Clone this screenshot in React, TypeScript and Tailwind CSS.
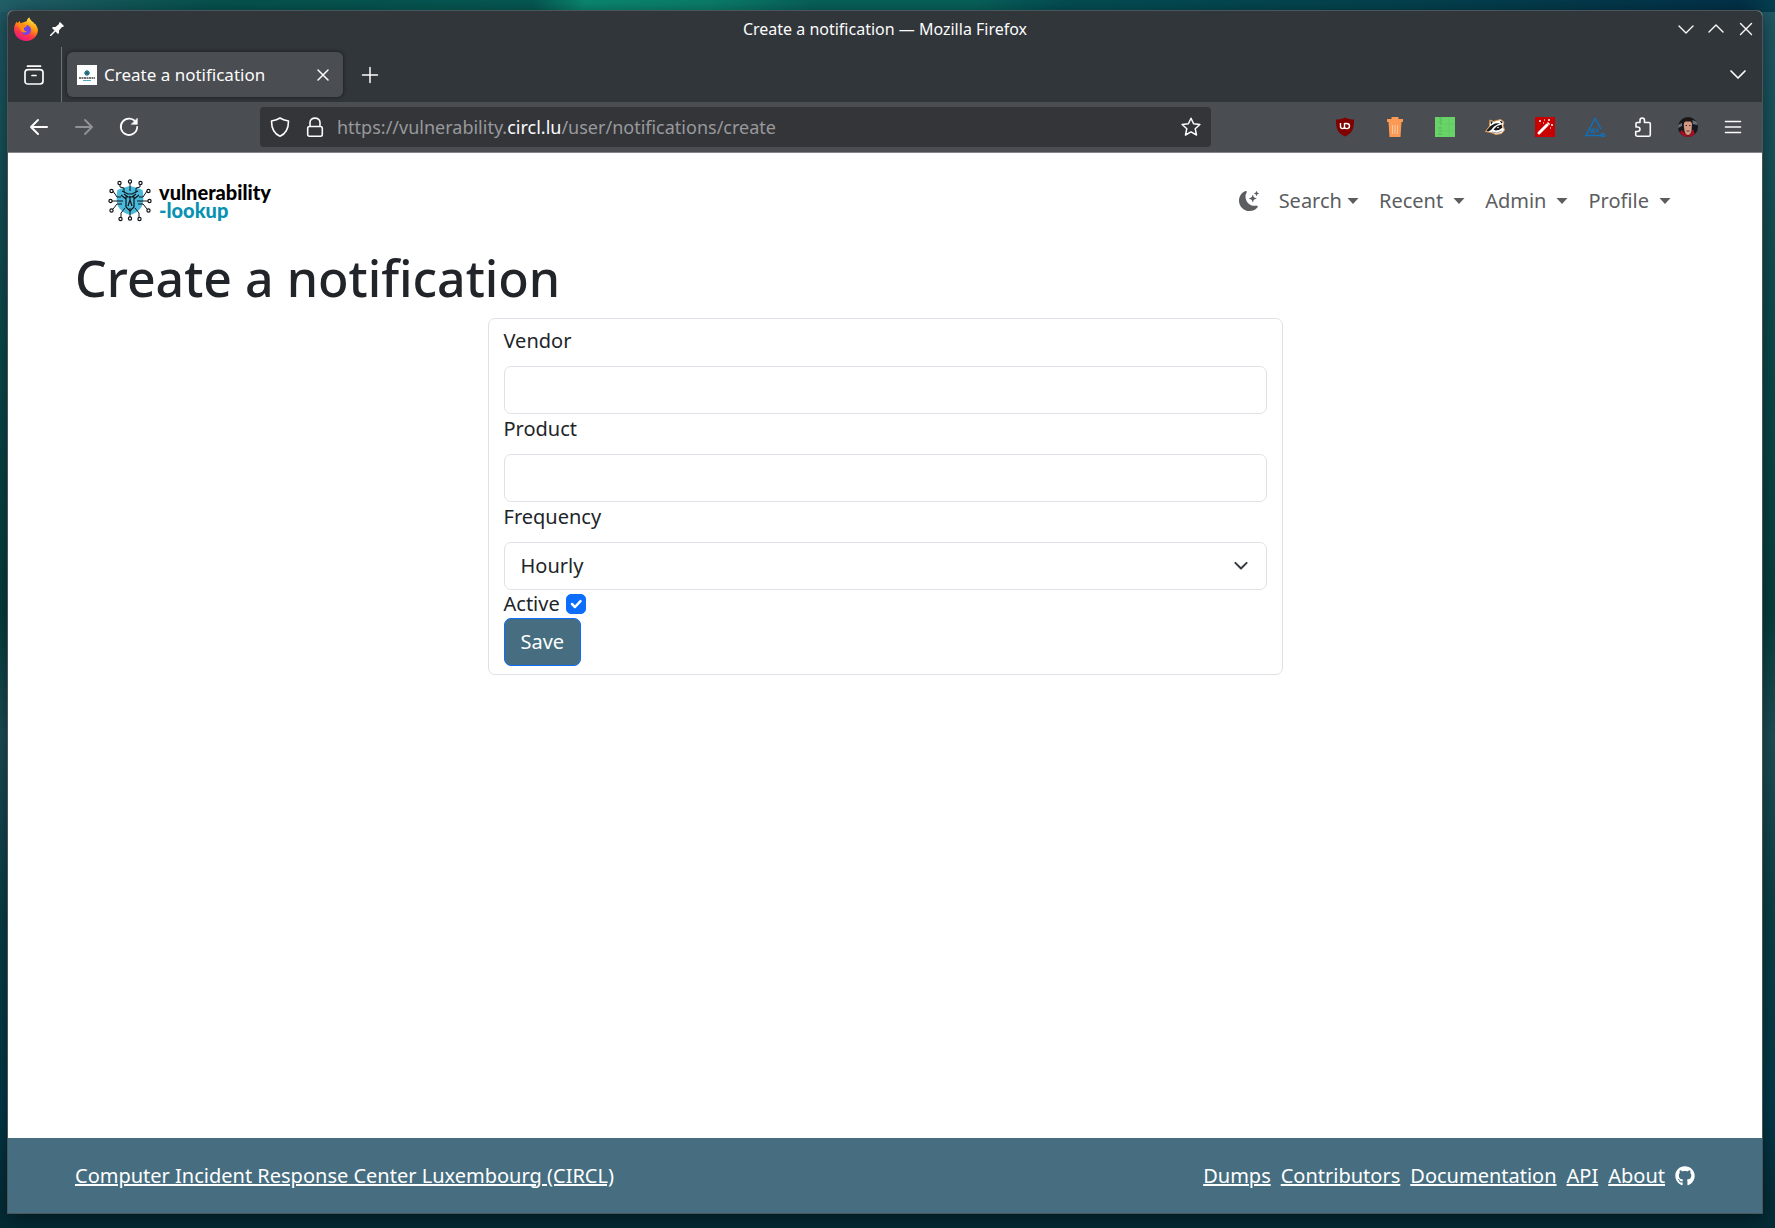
import { useState } from 'react';
import type { ReactNode } from 'react';
import { FaGithub } from 'react-icons/fa';

const navItems = [
  { label: 'Search', gap: 'gap-[5px]' },
  { label: 'Recent', gap: 'gap-2.5' },
  { label: 'Admin', gap: 'gap-2.5' },
  { label: 'Profile', gap: 'gap-2.5' },
];
const footerLinks = ['Dumps', 'Contributors', 'Documentation', 'API', 'About'];

function Stroke({ children, size = 20, width = 1.5 }: { children: ReactNode; size?: number; width?: number }) {
  return (
    <svg
      width={size}
      height={size}
      viewBox={`0 0 ${size} ${size}`}
      fill="none"
      stroke="currentColor"
      strokeWidth={width}
      strokeLinecap="round"
      strokeLinejoin="round"
      aria-hidden={true}
    >
      {children}
    </svg>
  );
}

function FirefoxLogo() {
  return (
    <svg width="24" height="24" viewBox="0 0 24 24" aria-hidden={true}>
      <defs>
        <linearGradient id="fx" x1="0.8" y1="0" x2="0.3" y2="1">
          <stop offset="0" stopColor="#fff44f" />
          <stop offset="0.4" stopColor="#ff980e" />
          <stop offset="0.7" stopColor="#ff3647" />
          <stop offset="1" stopColor="#e31587" />
        </linearGradient>
      </defs>
      <path
        d="M12.6 4.2C13 2.4 14.200 1 15.400 0.300C15.600 2.400 17.300 3.600 18.800 5C19.700 5.300 20.200 6.300 20.400 6.900C21.200 6.700 21.800 7.500 22 8.200C23.300 10 24 12 23.900 13.200C23.700 19.300 18.600 24 12.200 24C5.400 24 0.200 19 0.100 12.500C0 9.600 1 6.600 2.800 4.500C2.900 5.200 3.100 5.700 3.500 6.100C4.200 5.400 4.900 4.600 6 4.100C5.900 5 6.100 5.900 6.700 6.300Z"
        fill="url(#fx)"
      />
      <circle cx="12" cy="13" r="5" fill="#7542e5" />
      <path d="M3.500 8C6 6.600 8 6.300 9.800 7.200C11 7.900 12.300 7.700 13 8.400C13 9.700 10.500 10 10 11.200C9.500 13.400 11 14.600 13 14.200C10.500 16.600 6.500 15.500 6 11.500C5.500 10 4.500 8.800 3.500 8Z" fill="#ff8a16" />
    </svg>
  );
}

function BugLogo() {
  const legs = [
    'M22 12V4', 'M16 13V9L12 8V5', 'M28 13V9L32 8V5', 'M13 18H9L5 12', 'M31 18H35L39 12',
    'M15 22H3', 'M29 22H41', 'M14 25H9L5 30', 'M30 25H35L39 30', 'M17 29L13 34V38', 'M27 29L31 34V38', 'M22 29V38',
  ];
  const dots = [
    [22, 2.5], [11.5, 4], [32.5, 4], [3.5, 12], [40.5, 12], [2.5, 22],
    [41.5, 22], [3.5, 31.5], [40.5, 31.5], [12.5, 40], [31.5, 40], [22, 39.5],
  ];
  return (
    <svg width="44" height="44" viewBox="0 0 44 44" fill="none" stroke="#101418" aria-hidden={true}>
      <path d="M22 7C26 8 31 9 34.500 11C36 18 36 27 31 31C28 34 25 35 22 36C19 35 16 34 13 31C8 27 8 18 9.500 11C13 9 18 8 22 7Z" fill="#4bb9da" stroke="none" />
      {legs.map(d => (
        <path key={d} d={d} strokeWidth="1" />
      ))}
      {dots.map(([x, y]) => (
        <circle key={`${x}-${y}`} cx={x} cy={y} r="1.6" fill="#fff" strokeWidth="1.2" />
      ))}
      <path d="M14 12L20 15H24L30 12M16 15L20 18H24L28 15M18 18V28L22 32L26 28V18ZM22 17V21L20 27M22 21L24 27M13 16L18 20M31 16L26 20" strokeWidth="1.2" />
    </svg>
  );
}

function PinIcon() {
  return (
    <svg width="14" height="14" viewBox="0 0 14 14" fill="#fcfcfc" aria-hidden={true}>
      <path d="M10 0L14 4L13 5H12L9 8.500V11L8 12L5.500 9.500L1 14H0V13L4.500 8.500L2 6L3 5H5.500L9 2V1Z" />
    </svg>
  );
}

function MoonStars() {
  return (
    <svg width="20" height="20" viewBox="0 0 16 16" fill="currentColor" aria-hidden={true}>
      <path d="M6 .278a.77.77 0 0 1 .08.858 7.200 7.200 0 0 0-.878 3.460c0 4.021 3.278 7.277 7.318 7.277q.792-.001 1.533-.160a.79.79 0 0 1 .810.316.73.73 0 0 1-.031.893A8.350 8.350 0 0 1 8.344 16C3.734 16 0 12.286 0 7.710 0 4.266 2.114 1.312 5.124.060A.75.75 0 0 1 6 .278" />
      <path d="M10.794 3.148a.217.217 0 0 1 .412 0l.387 1.162c.173.518.579.924 1.097 1.097l1.162.387a.217.217 0 0 1 0 .412l-1.162.387a1.730 1.730 0 0 0-1.097 1.097l-.387 1.162a.217.217 0 0 1-.412 0l-.387-1.162A1.730 1.730 0 0 0 9.310 6.593l-1.162-.387a.217.217 0 0 1 0-.412l1.162-.387a1.730 1.730 0 0 0 1.097-1.097zM13.863.099a.145.145 0 0 1 .274 0l.258.774c.115.346.386.617.732.732l.774.258a.145.145 0 0 1 0 .274l-.774.258a1.160 1.160 0 0 0-.732.732l-.258.774a.145.145 0 0 1-.274 0l-.258-.774a1.160 1.160 0 0 0-.732-.732l-.774-.258a.145.145 0 0 1 0-.274l.774-.258c.346-.115.617-.386.732-.732z" />
    </svg>
  );
}

function UblockIcon() {
  return (
    <svg width="20" height="20" viewBox="0 0 20 20" aria-hidden={true}>
      <path d="M10 0.500C13 2 16 2.500 19 2.500C19 11 18 16 10 19.500C2 16 1 11 1 2.500C4 2.500 7 2 10 0.500Z" fill="#800000" />
      <path d="M5.500 6V9.500C5.500 12.300 9.500 12.300 9.500 9.500V6M9.500 6.500H11.500C15.500 6.500 15.500 11.600 11.500 11.600C10.300 11.600 9.500 11 9.500 9.500" fill="none" stroke="#fff" strokeWidth="1.4" />
    </svg>
  );
}

function TrashIcon() {
  return (
    <svg width="20" height="20" viewBox="0 0 20 20" aria-hidden={true}>
      <path d="M6.500 2V0H13.500V2H18V5H16.500L15.500 20H4.500L3.500 5H2V2Z" fill="#fb9a55" />
      <path d="M7.500 8V17M10 8V17M12.500 8V17" stroke="#ffc79b" strokeWidth="1" />
    </svg>
  );
}

function GreenIcon() {
  return (
    <svg width="20" height="20" viewBox="0 0 20 20" aria-hidden={true}>
      <path d="M0 0H20V20H0Z" fill="#68d468" />
      <path d="M4 1H7M5 3H7M4 5H7M5 7H7M3 11H7M4 14H7M3 17H7" stroke="#4fb553" strokeWidth="1" />
      <path d="M8 7H20M8 14H20M14 0V20" stroke="#61cc61" strokeWidth="1" />
    </svg>
  );
}

function BadgerIcon() {
  return (
    <svg width="20" height="20" viewBox="0 0 20 20" aria-hidden={true}>
      <path d="M0.500 14.500L4.500 9L5 3L8.500 4.500L15.500 2.500L19 5L18 8.500L19.500 13L16.500 16.500L11 17.500L6 15.500Z" fill="#fff" stroke="#e39a4f" strokeWidth="1" />
      <path d="M1.500 13.500L5.500 9L10 6.500L15 6L9 9.500L6 13L3 14.500ZM8.500 12.500L12 9L16.500 7.500L17.500 10.500L14 13L10.500 13.500ZM5.500 4L8 5L6 7.500ZM14.500 3.500L18 5L16.500 6.500Z" fill="#17181a" />
      <circle cx="13" cy="10.500" r="0.800" fill="#fff" />
      <path d="M7 15L12 16L17 14" fill="none" stroke="#999" strokeWidth="1" />
    </svg>
  );
}

function WandIcon() {
  return (
    <svg width="20" height="20" viewBox="0 0 20 20" aria-hidden={true}>
      <path d="M0 0H20V20H0Z" fill="#c80000" />
      <path d="M4 16L12 8" stroke="#fff" strokeWidth="3" strokeLinecap="round" />
      <path d="M13 7L14 6" stroke="#fff" strokeWidth="3" />
      <path d="M4 4H6M5 3V5M9 3H10M13 3H15M14 2V4M16 8H18M17 7V9M15 11H16M8 6H9" stroke="#fff" strokeWidth="1" />
    </svg>
  );
}

function AxIcon() {
  return (
    <svg width="20" height="20" viewBox="0 0 20 20" fill="none" stroke="#0f70bb" strokeWidth="1.5" aria-hidden={true}>
      <path d="M16 12L10 1.500L1 18.500H16" />
      <circle cx="18" cy="18" r="1.500" />
      <path d="M6 12H9V15.500H6.500C5.500 15.500 5.500 13.500 6.500 13.500H9M10.500 11.500L14 15.500M14 11.500L10.500 15.500" strokeWidth="1.1" />
    </svg>
  );
}

function Avatar() {
  return (
    <svg width="20" height="20" viewBox="0 0 20 20" aria-hidden={true}>
      <defs>
        <clipPath id="face">
          <circle cx="10" cy="10" r="10" />
        </clipPath>
      </defs>
      <g clipPath="url(#face)">
        <path d="M0 0H20V20H0Z" fill="#17181d" />
        <path d="M14 3L20 5V8L14 7ZM0 8L4 6V9L0 11Z" fill="#687078" />
        <path d="M1 20L3 13L7 16L10 19L13 16L15 12L18 20Z" fill="#a80e22" />
        <path d="M5.500 6C6 2.500 14 2.500 14 6L13.500 14C12 19.500 8 19.500 6.500 14Z" fill="#d29a84" />
        <path d="M5 8C4 2 8 1 10 1C14 0.500 15.500 4 14.500 8L13 4.500H7Z" fill="#1d1512" />
        <path d="M7.500 8.500H9M11 8.500H12.500M8.500 14H11.500" stroke="#5a2d25" strokeWidth="1" />
      </g>
    </svg>
  );
}

function PuzzleIcon() {
  return (
    <Stroke width={1.6}>
      <path d="M3 6.500C3 5.800 3.300 5.500 4 5.500H7V3.500C7 0.200 11.500 0.200 11.500 3.500V5.500H16C17 5.500 17.300 6 17.300 6.800V17.500C17.300 18.500 17 19.200 16 19.200H4.500C3.300 19.200 2.700 18.500 2.700 17.500V14.500H4.500C7.800 14.500 7.800 10 4.500 10H3Z" />
    </Stroke>
  );
}

const extensions = [
  { label: 'uBlock Origin', Icon: UblockIcon },
  { label: 'Cookie cleaner', Icon: TrashIcon },
  { label: 'Page grid', Icon: GreenIcon },
  { label: 'Privacy Badger', Icon: BadgerIcon },
  { label: 'Magic wand', Icon: WandIcon },
  { label: 'axe DevTools', Icon: AxIcon },
];

function TitleBar() {
  return (
    <div className="grid h-9 grid-cols-[1fr_auto_1fr] items-center px-1.5">
      <div className="flex items-center gap-3">
        <FirefoxLogo />
        <button type="button" aria-label="Keep on all desktops">
          <PinIcon />
        </button>
      </div>
      <div className="text-base">Create a notification — Mozilla Firefox</div>
      <div className="flex justify-end gap-2.5">
        <button type="button" aria-label="Minimize">
          <Stroke width={1.4}>
            <path d="M3 7L10 14L17 7" />
          </Stroke>
        </button>
        <button type="button" aria-label="Maximize">
          <Stroke width={1.4}>
            <path d="M3 13L10 6L17 13" />
          </Stroke>
        </button>
        <button type="button" aria-label="Close window">
          <Stroke width={1.4}>
            <path d="M4.500 4.500L15.500 15.500M15.500 4.500L4.500 15.500" />
          </Stroke>
        </button>
      </div>
    </div>
  );
}

function TabStrip() {
  return (
    <div className="flex h-[55px] items-stretch pr-3.5">
      <button type="button" aria-label="Recent browsing" className="flex w-[53px] items-center justify-center pr-0.5">
        <Stroke width={1.7}>
          <path d="M3.500 1.200H16.500" />
          <path d="M4 4.700H16C18 4.700 19 5.700 19 7.700V16C19 18 18 19 16 19H4C2 19 1 18 1 16V7.700C1 5.700 2 4.700 4 4.700ZM8 10.500H12" />
        </Stroke>
      </button>
      <div className="border-l border-[#6f7377]" />
      <div className="my-[5px] ml-[5px] flex w-[276px] items-center gap-[7px] rounded-md bg-[#4a4d52] px-2.5 shadow-[0_0_4px_rgba(0,0,0,0.5)]">
        <svg width="20" height="20" viewBox="0 0 20 20" aria-hidden={true}>
          <path d="M0 0H20V20H0Z" fill="#fff" />
          <circle cx="10" cy="8" r="2.500" fill="#2c8ba0" />
          <path d="M7 8H13M10 5V11M8 6L12 10M12 6L8 10" stroke="#24606e" strokeWidth="0.8" />
          <path d="M2 13H18" stroke="#444" strokeWidth="1.4" strokeDasharray="2 0.500" />
          <path d="M6 15.500H14" stroke="#51a8bd" strokeWidth="1.2" />
        </svg>
        <span className="flex-1 text-[17px]">Create a notification</span>
        <button type="button" aria-label="Close tab">
          <Stroke>
            <path d="M5 5L15 15M15 5L5 15" />
          </Stroke>
        </button>
      </div>
      <button type="button" aria-label="New tab" className="ml-[17px]">
        <Stroke>
          <path d="M10 2.500V17.500M2.500 10H17.500" />
        </Stroke>
      </button>
      <button type="button" aria-label="List all tabs" className="ml-auto">
        <Stroke width={1.7}>
          <path d="M3 6L10 13L17 6" />
        </Stroke>
      </button>
    </div>
  );
}

function Toolbar() {
  return (
    <div className="flex h-[51px] items-center border-b border-[#83868a] bg-[#4a4d52] pr-[19px] pl-[21px]">
      <div className="flex w-[231px] gap-[25px]">
        <button type="button" aria-label="Back">
          <Stroke width={2}>
            <path d="M18 10H2M9 3L2 10L9 17" />
          </Stroke>
        </button>
        <button type="button" aria-label="Forward" className="text-[#8f9194]">
          <Stroke width={2}>
            <path d="M2 10H18M11 3L18 10L11 17" />
          </Stroke>
        </button>
        <button type="button" aria-label="Reload">
          <Stroke width={1.8}>
            <path d="M17 5.500A8.200 8.200 0 1 0 18.200 10" />
            <path d="M18.300 1.500V7.300H12.500Z" fill="currentColor" strokeWidth="0.6" />
          </Stroke>
        </button>
      </div>
      <div className="flex h-10 min-w-0 flex-1 items-center rounded bg-[#343539] px-2.5">
        <Stroke width={1.6}>
          <path d="M10 1C12.500 2.800 15.500 3.500 18.500 4C18.500 11 16.500 16.500 10 19.200C3.500 16.500 1.500 11 1.500 4C4.500 3.500 7.500 2.800 10 1Z" />
        </Stroke>
        <span className="ml-[15px]">
          <Stroke width={1.6}>
            <path d="M5 9.500V5.500C5 -0.300 15 -0.300 15 5.500V9.500M4.500 9.500H15.500C16.700 9.500 17.300 10.200 17.300 11.200V17.500C17.300 18.600 16.700 19.200 15.500 19.200H4.500C3.300 19.200 2.700 18.600 2.700 17.500V11.200C2.700 10.200 3.300 9.500 4.500 9.500Z" />
          </Stroke>
        </span>
        <span className="ml-3 flex-1 truncate text-lg text-[#98999c]">
          https://vulnerability.<span className="text-[#fbfbfe]">circl.lu</span>/user/notifications/create
        </span>
        <button type="button" aria-label="Bookmark this page">
          <Stroke width={1.5}>
            <path d="M10 1.200L12.600 6.800L18.900 7.500L14.200 11.700L15.500 18L10 14.800L4.500 18L5.800 11.700L1.100 7.500L7.400 6.800Z" />
          </Stroke>
        </button>
      </div>
      <div className="flex w-[532px] items-center justify-end">
        <div className="flex gap-[30px]">
          {extensions.map(({ label, Icon }) => (
            <button type="button" key={label} aria-label={label}>
              <Icon />
            </button>
          ))}
        </div>
        <button type="button" aria-label="Extensions" className="ml-7">
          <PuzzleIcon />
        </button>
        <button type="button" aria-label="Account" className="ml-[25px]">
          <Avatar />
        </button>
        <button type="button" aria-label="Application menu" className="ml-[25px]">
          <Stroke width={1.6}>
            <path d="M2.500 4.500H17.500M2.500 10H17.500M2.500 15.500H17.500" />
          </Stroke>
        </button>
      </div>
    </div>
  );
}

function SiteNav() {
  return (
    <nav className="flex h-[95px] items-center justify-between pr-6 pl-[33px]">
      <a href="#home" className="flex items-center gap-[7px]">
        <BugLogo />
        <span className="flex flex-col font-[Lato] text-xl leading-[18px] font-black text-black">
          <span>vulnerability</span>
          <span className="text-[#0891b2]">-lookup</span>
        </span>
      </a>
      <div className="flex items-center gap-5 text-[#5b5d60]">
        <button type="button" aria-label="Toggle theme">
          <MoonStars />
        </button>
        {navItems.map(({ label, gap }) => (
          <button type="button" key={label} className={`flex items-center ${gap}`}>
            {label}
            <svg width="12" height="6" viewBox="0 0 12 6" fill="currentColor" aria-hidden={true}>
              <path d="M0.500 0H11.500L6 6Z" />
            </svg>
          </button>
        ))}
      </div>
    </nav>
  );
}

const fieldClass = 'h-12 w-full rounded-[7px] border border-[#dee2e6] bg-white px-4';

function NotificationForm() {
  const [active, setActive] = useState(true);

  return (
    <form
      className="mx-auto w-[calc(50%-15px)] rounded-[7px] border border-[#dee2e6] px-[15px] pt-[7px] pb-2"
      onSubmit={e => e.preventDefault()}
    >
      <label htmlFor="vendor" className="mb-2.5 block">Vendor</label>
      <input id="vendor" type="text" className={fieldClass} />
      <label htmlFor="product" className="mb-2.5 block">Product</label>
      <input id="product" type="text" className={fieldClass} />
      <label htmlFor="frequency" className="mb-2.5 block">Frequency</label>
      <div className="relative">
        <select id="frequency" className={`${fieldClass} block appearance-none`}>
          <option>Hourly</option>
          <option>Daily</option>
          <option>Weekly</option>
        </select>
        <svg
          className="pointer-events-none absolute top-1/2 right-4 -translate-y-1/2"
          width="20"
          height="20"
          viewBox="0 0 16 16"
          fill="none"
          stroke="#343a40"
          strokeWidth="1.6"
          strokeLinecap="round"
          strokeLinejoin="round"
          aria-hidden={true}
        >
          <path d="M3.500 5.500L8 10L12.500 5.500" />
        </svg>
      </div>
      <div className="flex h-7 items-center gap-1.5">
        <label htmlFor="active">Active</label>
        <span className="relative size-5">
          <input
            id="active"
            type="checkbox"
            checked={active}
            onChange={e => setActive(e.target.checked)}
            className="block size-5 appearance-none rounded-[5px] border border-[#dee2e6] checked:border-[#0d6efd] checked:bg-[#0d6efd]"
          />
          {active && (
            <svg className="pointer-events-none absolute inset-0" width="20" height="20" viewBox="0 0 20 20" fill="none" stroke="#fff" strokeWidth="2.5" strokeLinecap="round" strokeLinejoin="round" aria-hidden={true}>
              <path d="M6 10L9 13L14.500 7.200" />
            </svg>
          )}
        </span>
      </div>
      <button type="submit" className="block h-12 rounded-[7px] border border-[#0d6efd] bg-[#466e80] px-4 text-white">
        Save
      </button>
    </form>
  );
}

function Footer() {
  return (
    <footer className="bg-[#466e80] text-white">
      <div className="mx-auto flex h-[75px] max-w-[1650px] items-center justify-between px-[15px]">
        <a href="#circl" className="underline">Computer Incident Response Center Luxembourg (CIRCL)</a>
        <div className="flex items-center gap-2.5">
          {footerLinks.map(link => (
            <a key={link} href={`#${link.toLowerCase()}`} className="underline">
              {link}
            </a>
          ))}
          <a href="#github" aria-label="GitHub">
            <FaGithub size={20} />
          </a>
        </div>
      </div>
    </footer>
  );
}

// Wallpaper: a bright strip along the top over a vertical teal fade
const wallpaper =
  'bg-[linear-gradient(90deg,#23606a_0%,#06534f_12%,#065a54_30%,#0b8a72_33%,#0b806c_40%,#08625c_46%,#08625c_55%,#044f55_60%,#04424f_80%,#03324a_98%,#04404f_100%),linear-gradient(180deg,#205a66_0%,#0a4a4c_30%,#06403f_50%,#1d5059_60%,#0a4048_75%,#033a4c_90%,#042c36_100%)] bg-size-[100%_12px,100%_100%] bg-no-repeat';

export default function App() {
  return (
    <div className={`flex min-h-screen flex-col pt-2.5 pr-3 pb-3.5 pl-[7px] font-['Noto_Sans',sans-serif] text-xl leading-[30px] text-[#212529] ${wallpaper}`}>
      <div className="flex flex-1 flex-col overflow-hidden rounded-t-md border border-[#4b565c] bg-white shadow-[0_4px_20px_rgba(0,0,0,0.5)]">
        <header className="bg-[#31363a] text-[#fcfcfc]">
          <TitleBar />
          <TabStrip />
          <Toolbar />
        </header>
        <main className="mx-auto w-full max-w-[1650px] flex-1 px-[15px]">
          <SiteNav />
          <h1 className="mb-2.5 text-[50px] leading-[60px] font-medium">Create a notification</h1>
          <NotificationForm />
        </main>
        <Footer />
      </div>
    </div>
  );
}
